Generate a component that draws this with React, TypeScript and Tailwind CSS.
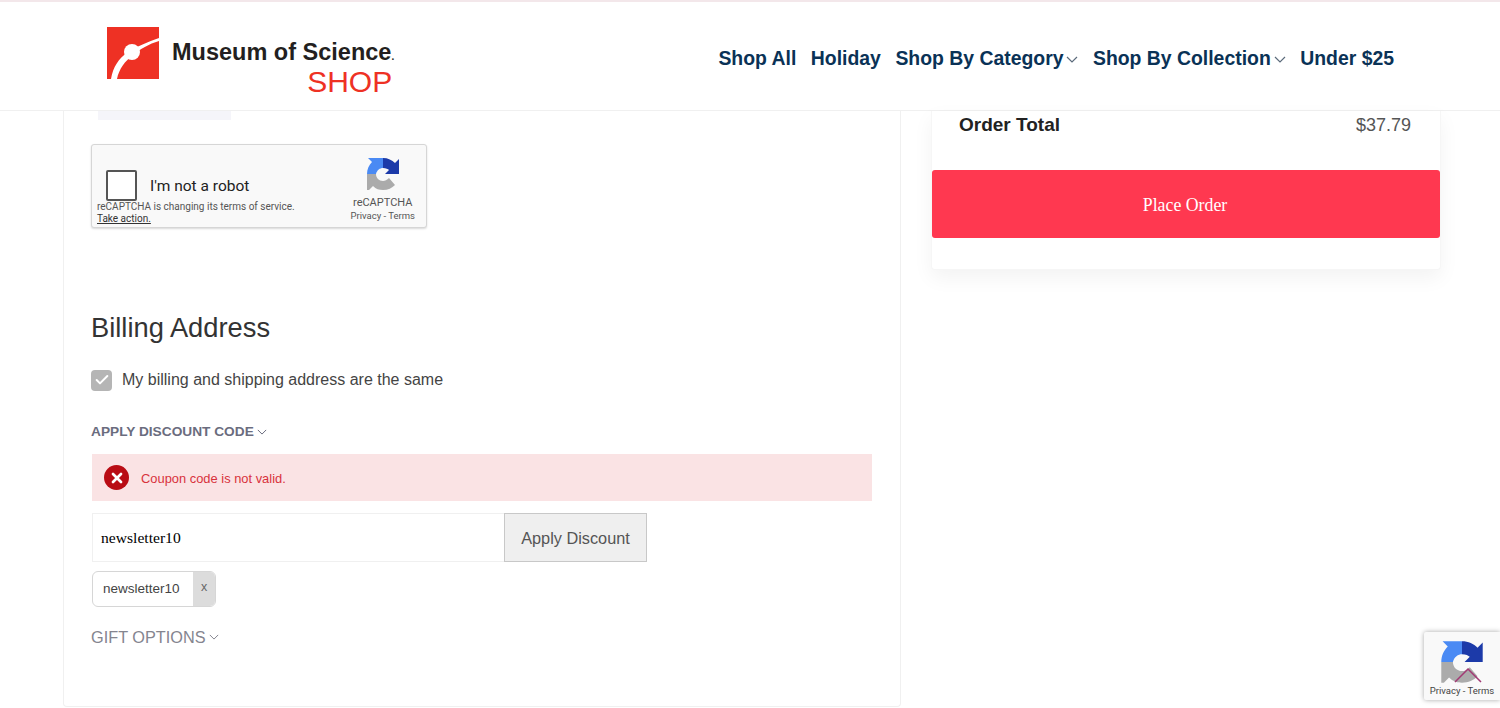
import { Check, X } from 'lucide-react';

const sans = 'font-["Liberation_Sans",Arial,sans-serif]';

function Caret({ className }: { className: string }) {
  return (
    <svg viewBox="0 0 12 7" className={className}>
      <path d="M1 1L6 6L11 1" fill="none" stroke="currentColor" strokeWidth="1.2" />
    </svg>
  );
}

function RecaptchaLogo({ className }: { className: string }) {
  return (
    <svg viewBox="0 0 34 34" className={className}>
      <path fill="#ababab" d="M1 17H10C10 21 13 24 17 24C19 24 21 23 23 21L29 28C26 31 22 33 17 33C13 33 10 32 7 29L3 33H1Z" />
      <path fill="#4a8af4" d="M1 17C1 12 3 8 6 5L2 1H17V11C14 11 11 13 10 17Z" />
      <path fill="#1c3aa9" d="M17 1C22 1 26 3 29 6L33 2V17H19L23 13C22 12 20 11 17 11Z" />
    </svg>
  );
}

function Logo() {
  return (
    <div className="flex items-start">
      <svg viewBox="0 0 52 52" className="w-[52px] h-[52px] shrink-0">
        <rect width="52" height="52" fill="#ee3124" />
        <path d="M4 52C6 40 12 31 20 26C30 19 41 15 52 11V14C42 17 33 22 26 28C18 34 12 42 10 52Z" fill="#fff" />
        <circle cx="25" cy="25" r="8" fill="#fff" />
      </svg>
      <div className="ml-[13px] mt-[12px] flex flex-col items-end">
        <span className={`${sans} font-bold text-[23.5px] leading-[27px] text-[#231f20] whitespace-nowrap`}>
          Museum of Science<span className="text-[10px]">.</span>
        </span>
        <span className={`${sans} text-[30px] leading-[30px] text-[#ee3124] mr-[2px] mt-[-3px]`}>SHOP</span>
      </div>
    </div>
  );
}

function NavItem({ label, caret }: { label: string; caret?: boolean }) {
  return (
    <a className="flex items-center whitespace-nowrap">
      {label}
      {caret && <Caret className="w-[12px] h-[7px] ml-[3px] text-[#5b6b7b]" />}
    </a>
  );
}

function Recaptcha() {
  return (
    <div className="w-[336px] h-[84px] rounded-[3px] border border-[#d6d6d6] bg-[#f9f9f9] shadow-[0_1px_2px_rgba(0,0,0,0.15)] flex justify-between pl-[5px] pr-[11px] font-['Roboto',sans-serif]">
      <div className="flex flex-col">
        <div className="flex items-center mt-[25px] ml-[9px]">
          <div className="w-[31px] h-[31px] rounded-[2px] border-2 border-[#555] bg-white" />
          <span className="ml-[13px] pt-[2px] text-[15.5px] text-[#222]">I'm not a robot</span>
        </div>
        <span className="text-[10px] leading-[12px] text-[#555] whitespace-nowrap">reCAPTCHA is changing its terms of service.</span>
        <span className="text-[10px] leading-[12px] text-[#333] underline">Take action.</span>
      </div>
      <div className="flex flex-col items-center mt-[12px]">
        <RecaptchaLogo className="w-[34px] h-[34px]" />
        <span className="text-[11px] leading-[12px] text-[#555] mt-[6px]">reCAPTCHA</span>
        <span className="text-[9.5px] leading-[12px] text-[#555] mt-[1px] whitespace-nowrap">Privacy - Terms</span>
      </div>
    </div>
  );
}

export default function App() {
  return (
    <div className={`${sans} relative h-[708px] overflow-hidden bg-white`}>
      <header className="h-[111px] border-t-2 border-b border-t-[#f3e7ea] border-b-[#f0f0f0] flex justify-between pl-[107px] pr-[106px] pt-[25px]">
        <Logo />
        <nav className="flex gap-[14.5px] mt-[18px] h-[28px] font-bold text-[19.4px] text-[#0a3256]">
          <NavItem label="Shop All" />
          <NavItem label="Holiday" />
          <NavItem label="Shop By Category" caret />
          <NavItem label="Shop By Collection" caret />
          <NavItem label="Under $25" />
        </nav>
      </header>

      <main className="flex items-start pl-[63px]">
        <section className="w-[838px] h-[596px] border border-t-0 border-[#f0f0f0] rounded-b-[4px] pl-[27px] pr-[28px]">
          <div className="w-[133px] h-[9px] bg-[#f5f5fa] ml-[7px]" />
          <div className="mt-[24px]">
            <Recaptcha />
          </div>
          <h2 className="mt-[82px] text-[27.3px] leading-[36px] text-[#333]">Billing Address</h2>
          <label className="mt-[23px] flex items-center">
            <span className="w-[21px] h-[21px] rounded-[4px] bg-[#b5b5b5] flex items-center justify-center">
              <Check className="w-[16px] h-[16px] text-white" strokeWidth={3} />
            </span>
            <span className="ml-[10px] text-[16px] leading-[22px] text-[#444]">My billing and shipping address are the same</span>
          </label>
          <button className="mt-[31px] flex items-center text-[13.7px] leading-[20px] font-bold text-[#6a6c7e]">
            APPLY DISCOUNT CODE
            <Caret className="w-[10px] h-[6px] ml-[3px]" />
          </button>
          <div className="mt-[12px] ml-px w-[780px] h-[47px] bg-[#fae3e4] flex items-center pl-[12px]">
            <span className="w-[25px] h-[25px] rounded-full bg-[#b90c14] flex items-center justify-center">
              <X className="w-[16px] h-[16px] text-white" strokeWidth={4} />
            </span>
            <span className="ml-[12px] pt-[2px] text-[12.9px] text-[#d8323c]">Coupon code is not valid.</span>
          </div>
          <div className="mt-[12px] ml-px flex h-[49px]">
            <div className="w-[412px] border border-r-0 border-[#f0f0f0] flex items-center pl-[8px] font-['Liberation_Serif',serif] text-[15.6px] text-black">
              newsletter10
            </div>
            <button className="w-[143px] pt-[2px] border border-[#c8c8c8] bg-[#efefef] text-[16.3px] text-[#555]">Apply Discount</button>
          </div>
          <div className="mt-[9px] ml-px w-[124px] h-[36px] flex rounded-[6px] border border-[#d6d6d6] overflow-hidden">
            <span className="flex-1 flex items-center pl-[10px] text-[13.5px] text-[#444]">newsletter10</span>
            <span className="w-[22px] bg-[#dcdcdc] flex items-center justify-center pb-[3px] text-[12.5px] text-[#666]">x</span>
          </div>
          <button className="mt-[19px] flex items-center text-[16.3px] leading-[22px] text-[#85858f]">
            GIFT OPTIONS
            <Caret className="w-[10px] h-[6px] ml-[3px]" />
          </button>
        </section>

        <aside className="ml-[30px] w-[510px] h-[159px] rounded-b-[4px] bg-white shadow-[0_8px_20px_rgba(0,0,0,0.05)] border-x border-b border-[#f6f6f6]">
          <div className="flex justify-between items-center pl-[27px] pr-[29px] h-[24px] mt-[2px]">
            <span className="font-bold text-[19px] text-[#222]">Order Total</span>
            <span className="text-[18px] text-[#555]">$37.79</span>
          </div>
          <button className="mt-[33px] w-full h-[68px] pt-[2px] pr-[2px] rounded-[3px] bg-[#ff3850] text-white text-[17.8px] font-['Liberation_Serif',serif]">
            Place Order
          </button>
        </aside>
      </main>

      <div className="absolute right-0 top-[632px] w-[76px] h-[68px] bg-[#f9f9f9] rounded-l-[2px] shadow-[0_0_5px_rgba(0,0,0,0.35)] flex flex-col items-center pt-[8px] font-['Roboto',sans-serif]">
        <RecaptchaLogo className="w-[44px] h-[44px]" />
        <span className="text-[9.5px] leading-[12px] text-[#444] mt-[1px] whitespace-nowrap">Privacy - Terms</span>
      </div>
      <svg viewBox="0 0 28 16" className="absolute left-[1454px] top-[667px] w-[28px] h-[16px]">
        <path d="M1 15L14 2L27 15" fill="none" stroke="#a23a74" strokeWidth="1.5" />
      </svg>
    </div>
  );
}
